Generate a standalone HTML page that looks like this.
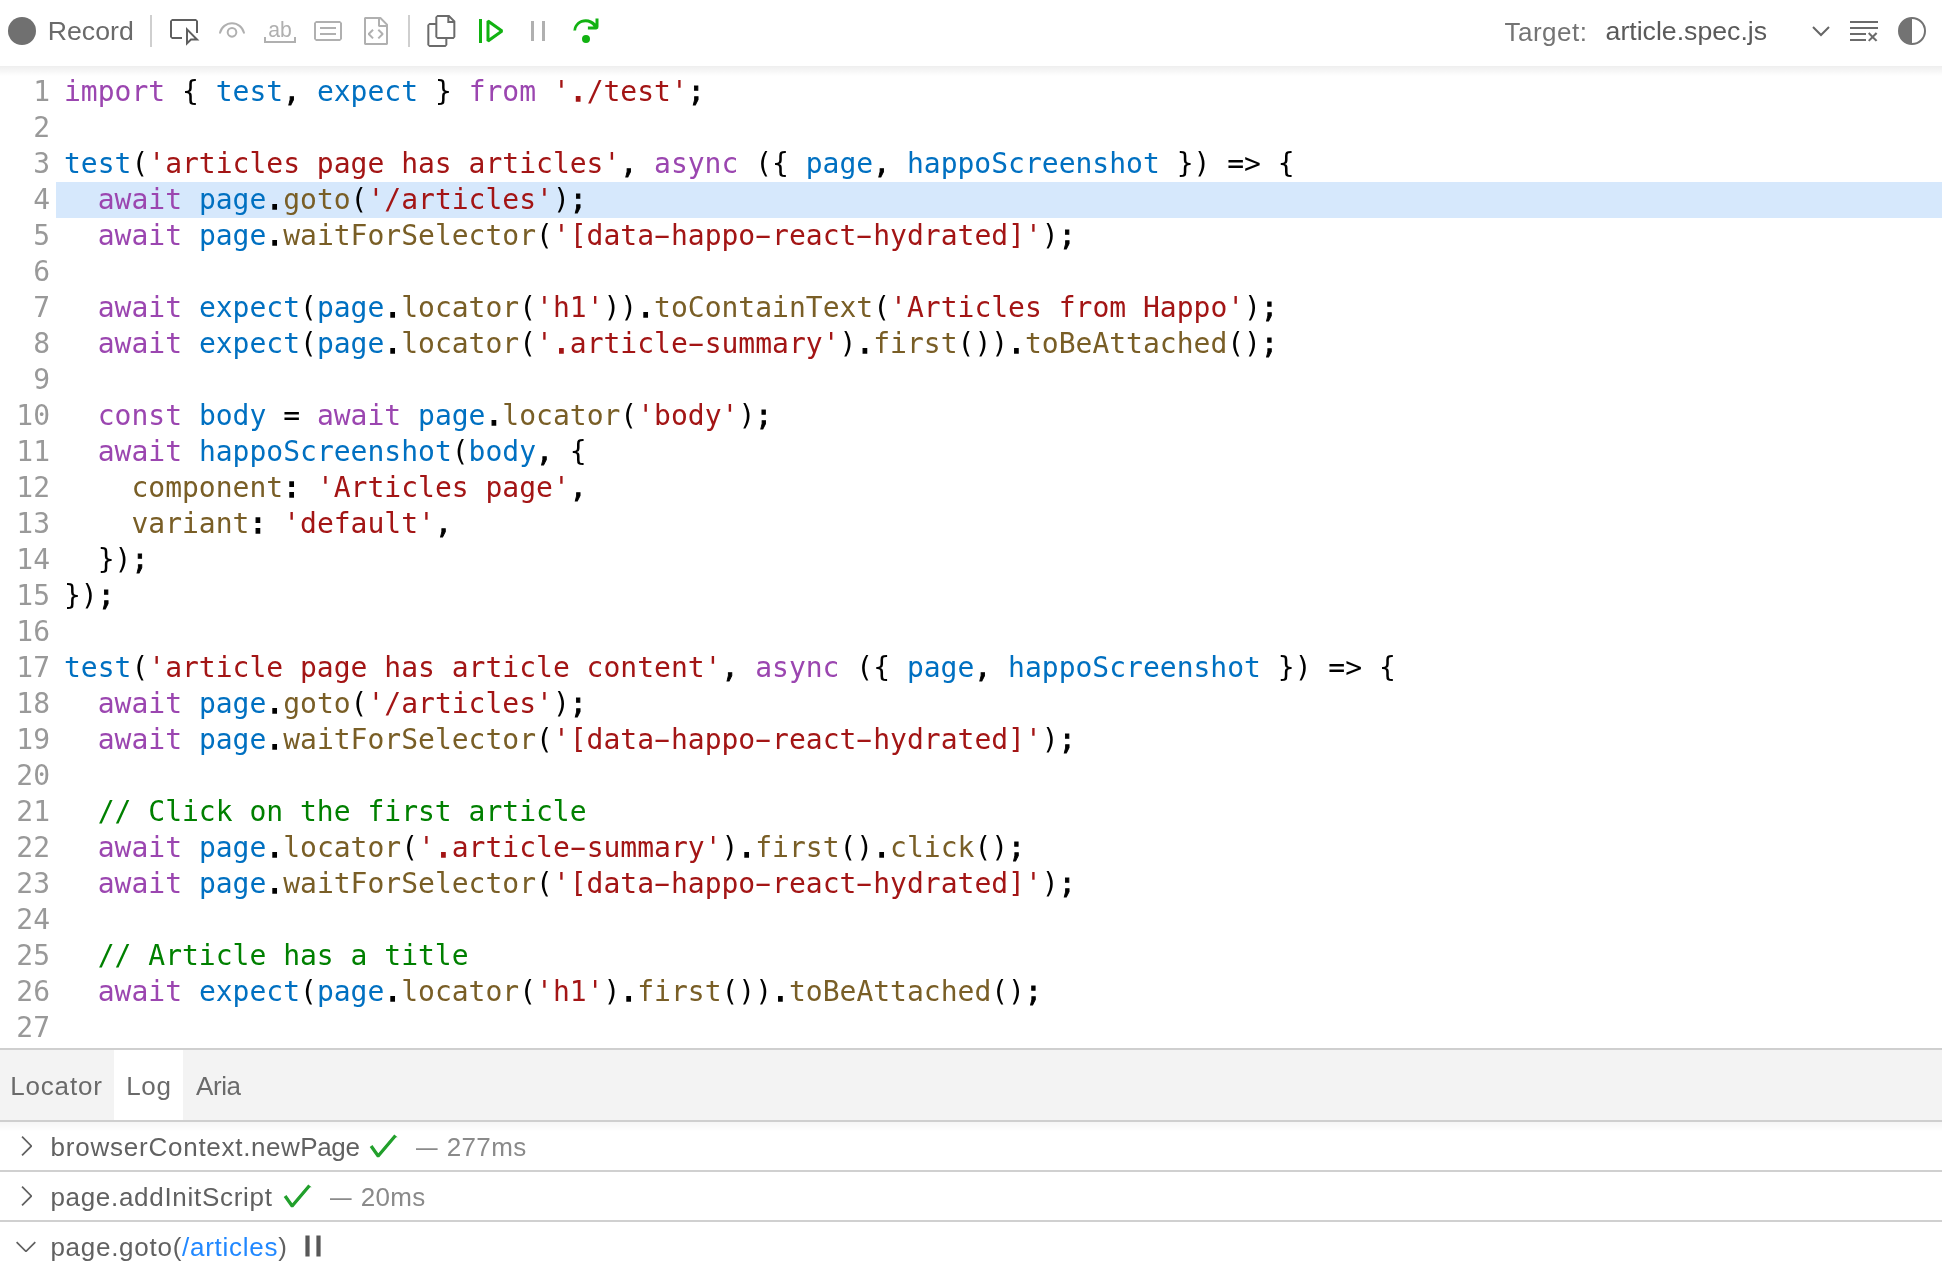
<!DOCTYPE html>
<html lang="en"><head><meta charset="utf-8"><title>Playwright Inspector</title>
<style>
html,body{margin:0;padding:0;background:#fff;}
body{width:1942px;height:1286px;overflow:hidden;position:relative;font-family:"Liberation Sans",Arial,sans-serif;font-size:26px;color:#616161;}
.abs{position:absolute;white-space:nowrap;line-height:1;}
.ic{position:absolute;display:block;}
.shade{position:absolute;left:0;width:1942px;z-index:6;pointer-events:none;}
#toolbar{position:absolute;left:0;top:0;width:1942px;height:66px;background:#fff;z-index:5;}
.sep{position:absolute;top:15px;width:2px;height:32px;background:#cfcfcf;}
#code{position:absolute;left:0;top:66px;width:1942px;height:982px;padding-top:8px;box-sizing:border-box;overflow:hidden;background:#fff;
 font-family:"DejaVu Sans Mono","Liberation Mono",monospace;font-size:28px;line-height:36px;color:#000;}
.ln{position:relative;height:36px;white-space:pre;}
.ln.hl::before{content:"";position:absolute;left:56px;right:0;top:0;bottom:0;background:#d6e8fc;}
.no{position:absolute;left:0;top:0;width:50px;text-align:right;color:#999;}
.tx{position:absolute;left:64px;top:0;}
.h{display:inline-block;transform:scaleX(1.85);transform-origin:53% 50%}
.d{-webkit-text-stroke:1.3px currentColor}.d2{-webkit-text-stroke:0.9px currentColor}
.k{color:#9b46b0}.v{color:#0070c1}.s{color:#a31515}.p{color:#795e26}.c{color:#008000}
#tabs{position:absolute;left:0;top:1048px;width:1942px;height:74px;box-sizing:border-box;border-top:2px solid #cfcfcf;border-bottom:2px solid #cfcfcf;background:#f3f3f3;z-index:4;}
#tabsel{position:absolute;left:114px;top:0;width:69px;height:70px;background:#fff;}
.row{position:absolute;left:0;width:1942px;height:48px;border-bottom:2px solid #d0d0d0;}
.t{color:#8a8a8a;letter-spacing:0.35px}
.dash{display:inline-block;transform:scaleX(0.83);transform-origin:0 50%;margin-right:-3.2px;}
#app{position:absolute;left:0;top:0;width:1942px;height:1286px;will-change:transform;}
</style></head><body><div id="app">
<div id="toolbar">
<svg class="ic" style="left:6px;top:15px" width="32" height="32" viewBox="0 0 16 16" fill="#707070"><circle cx="8" cy="8" r="7"/></svg><span class="abs" id="rec" style="left:47.8px;top:18.2px;font-size:26.67px;color:#6a6a6a">Record</span><div class="sep" style="left:150px"></div><svg class="ic" style="left:168px;top:15px" width="32" height="32" viewBox="0 0 16 16" fill="#5f5f5f"><path fill-rule="evenodd" d="M1 3l1-1h12l1 1v6h-1V3H2v8h5v1H2l-1-1V3zm14.707 9.707L9 6v9.414l2.707-2.707h4zM10 13V8.414l3.293 3.293h-2L10 13z"/></svg><svg class="ic" style="left:216px;top:15px" width="32" height="32" viewBox="0 0 16 16" fill="#b0b0b0"><path d="M8 6.003a2.667 2.667 0 1 1 0 5.334 2.667 2.667 0 0 1 0-5.334zm0 1a1.667 1.667 0 1 0 0 3.334 1.667 1.667 0 0 0 0-3.334zM8 3.667c3.076 0 5.731 2.1 6.467 5.043a.5.5 0 0 1-.97.243A5.668 5.668 0 0 0 8 4.667a5.668 5.668 0 0 0-5.498 4.289.5.5 0 0 1-.97-.243C2.267 5.769 4.923 3.667 8 3.667z"/></svg><svg class="ic" style="left:264px;top:15px" width="32" height="32" viewBox="0 0 16 16" fill="#b0b0b0"><path d="M0 11H1V13H15V11H16V14H0V11Z"/><text x="8" y="11" text-anchor="middle" font-family="Liberation Sans, Arial, sans-serif" font-size="11.3" textLength="11.8" lengthAdjust="spacingAndGlyphs" fill="#b0b0b0">ab</text></svg><svg class="ic" style="left:312px;top:15px" width="32" height="32" viewBox="0 0 16 16" fill="#b0b0b0"><path fill-rule="evenodd" d="M4 6h8v1H4V6zm8 3H4v1h8V9z"/><path fill-rule="evenodd" d="M1 4l1-1h12l1 1v8l-1 1H2l-1-1V4zm1 0v8h12V4H2z"/></svg><svg class="ic" style="left:360px;top:15px" width="32" height="32" viewBox="0 0 16 16" fill="#b0b0b0"><path fill-rule="evenodd" d="M10.57 1.14l3.28 3.3.15.36v9.7l-.5.5h-11l-.5-.5v-13l.5-.5h7.72l.35.14zM10 5h3l-3-3v3zM3 2v12h10V6H9.5L9 5.5V2H3zm2.062 7.533l1.817-1.828L6.17 7 4 9.179v.707l2.171 2.174.707-.707-1.816-1.82zM8.8 7.714l.7-.709 2.189 2.175v.709L9.5 12.062l-.705-.709 1.831-1.82L8.8 7.714z"/></svg><div class="sep" style="left:408px"></div><svg class="ic" style="left:426px;top:15px" width="32" height="32" viewBox="0 0 24 24" fill="#6b6b6b"><path fill-rule="evenodd" d="M17.5 0h-9L7 1.5V6H2.5L1 7.5v15.07L2.5 24h12.07L16 22.57V18h4.7l1.3-1.43V4.5L17.5 0zm0 2.12l2.38 2.38H17.5V2.12zm-3 20.38h-12v-15H7v9.07L8.5 18h6v4.5zm6-6h-12v-15H16V6h4.5v10.5z"/></svg><svg class="ic" style="left:474px;top:15px" width="32" height="32" viewBox="0 0 16 16" fill="#12b212"><path fill-rule="evenodd" d="M2.5 2H4v12H2.5V2zm4.936.39L6.25 3v10l1.186.61 7-5V7.39l-7-5zM12.71 8l-4.96 3.54V4.46L12.71 8z"/></svg><svg class="ic" style="left:522px;top:15px" width="32" height="32" viewBox="0 0 16 16" fill="#b0b0b0"><path d="M4.5 3H6v10H4.5V3zm7 0v10H10V3h1.5z"/></svg><svg class="ic" style="left:570px;top:15px" width="32" height="32" viewBox="0 0 16 16" fill="#12b212"><path fill-rule="evenodd" d="M14.25 5.75v-4h-1.5v2.542c-1.145-1.359-2.911-2.209-4.84-2.209-3.177 0-5.92 2.307-6.16 5.398l-.2.269h1.501l.022-.226c.212-2.195 2.202-3.94 4.656-3.94 1.736 0 3.244.875 4.05 2.166h-2.83v1.5h4.2l.92-.5zM8 14a2 2 0 1 0 0-4 2 2 0 0 0 0 4z"/></svg><span class="abs" id="tgt" style="left:1504.5px;top:19px;font-size:26px;letter-spacing:0.5px;color:#747474">Target:</span><span class="abs" id="sel" style="left:1605.6px;top:18px;font-size:26.67px;color:#5a5a5a">article.spec.js</span><svg class="ic" style="left:1808px;top:20px" width="26" height="22" viewBox="0 0 26 22" fill="none" stroke="#666" stroke-width="2"><path d="M5 7 L13 15 L21 7"/></svg><svg class="ic" style="left:1848px;top:15px" width="32" height="32" viewBox="0 0 16 16" fill="#6b6b6b"><path d="M10 12.6l.7.7 1.6-1.6 1.6 1.6.8-.7L13 11l1.700-1.600-.8-.8-1.6 1.7-1.6-1.7-.7.8 1.6 1.6-1.6 1.600zM1 4h14V3H1v1zm0 3h14V6H1v1zm8 2.500V9H1v1h8v-.5zM9 13v-1H1v1h8z"/></svg><svg class="ic" style="left:1896px;top:15px" width="32" height="32" viewBox="0 0 16 16" fill="#737373"><path fill-rule="evenodd" d="M8 1a7 7 0 1 0 0 14A7 7 0 0 0 8 1zm0 13V2a6 6 0 1 1 0 12z"/></svg></div>
<div class="shade" style="top:66px;height:10px;background:linear-gradient(to bottom,rgba(0,0,0,0.065),rgba(0,0,0,0))"></div>
<div class="shade" style="top:1122px;height:9px;background:linear-gradient(to bottom,rgba(0,0,0,0.04),rgba(0,0,0,0))"></div>
<div id="code">
<div class="ln"><span class="no">1</span><span class="tx"><span class="k">import</span> { <span class="v">test</span><span class="d2">,</span> <span class="v">expect</span> } <span class="k">from</span> <span class="s">'<span class="d">.</span>/test'</span><span class="d2">;</span></span></div>
<div class="ln"><span class="no">2</span><span class="tx"></span></div>
<div class="ln"><span class="no">3</span><span class="tx"><span class="v">test</span>(<span class="s">'articles page has articles'</span><span class="d2">,</span> <span class="k">async</span> ({ <span class="v">page</span><span class="d2">,</span> <span class="v">happoScreenshot</span> }) =&gt; {</span></div>
<div class="ln hl"><span class="no">4</span><span class="tx">  <span class="k">await</span> <span class="v">page</span><span class="d">.</span><span class="p">goto</span>(<span class="s">'/articles'</span>)<span class="d2">;</span></span></div>
<div class="ln"><span class="no">5</span><span class="tx">  <span class="k">await</span> <span class="v">page</span><span class="d">.</span><span class="p">waitForSelector</span>(<span class="s">'[data<span class="h">-</span>happo<span class="h">-</span>react<span class="h">-</span>hydrated]'</span>)<span class="d2">;</span></span></div>
<div class="ln"><span class="no">6</span><span class="tx"></span></div>
<div class="ln"><span class="no">7</span><span class="tx">  <span class="k">await</span> <span class="v">expect</span>(<span class="v">page</span><span class="d">.</span><span class="p">locator</span>(<span class="s">'h1'</span>))<span class="d">.</span><span class="p">toContainText</span>(<span class="s">'Articles from Happo'</span>)<span class="d2">;</span></span></div>
<div class="ln"><span class="no">8</span><span class="tx">  <span class="k">await</span> <span class="v">expect</span>(<span class="v">page</span><span class="d">.</span><span class="p">locator</span>(<span class="s">'<span class="d">.</span>article<span class="h">-</span>summary'</span>)<span class="d">.</span><span class="p">first</span>())<span class="d">.</span><span class="p">toBeAttached</span>()<span class="d2">;</span></span></div>
<div class="ln"><span class="no">9</span><span class="tx"></span></div>
<div class="ln"><span class="no">10</span><span class="tx">  <span class="k">const</span> <span class="v">body</span> = <span class="k">await</span> <span class="v">page</span><span class="d">.</span><span class="p">locator</span>(<span class="s">'body'</span>)<span class="d2">;</span></span></div>
<div class="ln"><span class="no">11</span><span class="tx">  <span class="k">await</span> <span class="v">happoScreenshot</span>(<span class="v">body</span><span class="d2">,</span> {</span></div>
<div class="ln"><span class="no">12</span><span class="tx">    <span class="p">component</span><span class="d">:</span> <span class="s">'Articles page'</span><span class="d2">,</span></span></div>
<div class="ln"><span class="no">13</span><span class="tx">    <span class="p">variant</span><span class="d">:</span> <span class="s">'default'</span><span class="d2">,</span></span></div>
<div class="ln"><span class="no">14</span><span class="tx">  })<span class="d2">;</span></span></div>
<div class="ln"><span class="no">15</span><span class="tx">})<span class="d2">;</span></span></div>
<div class="ln"><span class="no">16</span><span class="tx"></span></div>
<div class="ln"><span class="no">17</span><span class="tx"><span class="v">test</span>(<span class="s">'article page has article content'</span><span class="d2">,</span> <span class="k">async</span> ({ <span class="v">page</span><span class="d2">,</span> <span class="v">happoScreenshot</span> }) =&gt; {</span></div>
<div class="ln"><span class="no">18</span><span class="tx">  <span class="k">await</span> <span class="v">page</span><span class="d">.</span><span class="p">goto</span>(<span class="s">'/articles'</span>)<span class="d2">;</span></span></div>
<div class="ln"><span class="no">19</span><span class="tx">  <span class="k">await</span> <span class="v">page</span><span class="d">.</span><span class="p">waitForSelector</span>(<span class="s">'[data<span class="h">-</span>happo<span class="h">-</span>react<span class="h">-</span>hydrated]'</span>)<span class="d2">;</span></span></div>
<div class="ln"><span class="no">20</span><span class="tx"></span></div>
<div class="ln"><span class="no">21</span><span class="tx">  <span class="c">// Click on the first article</span></span></div>
<div class="ln"><span class="no">22</span><span class="tx">  <span class="k">await</span> <span class="v">page</span><span class="d">.</span><span class="p">locator</span>(<span class="s">'<span class="d">.</span>article<span class="h">-</span>summary'</span>)<span class="d">.</span><span class="p">first</span>()<span class="d">.</span><span class="p">click</span>()<span class="d2">;</span></span></div>
<div class="ln"><span class="no">23</span><span class="tx">  <span class="k">await</span> <span class="v">page</span><span class="d">.</span><span class="p">waitForSelector</span>(<span class="s">'[data<span class="h">-</span>happo<span class="h">-</span>react<span class="h">-</span>hydrated]'</span>)<span class="d2">;</span></span></div>
<div class="ln"><span class="no">24</span><span class="tx"></span></div>
<div class="ln"><span class="no">25</span><span class="tx">  <span class="c">// Article has a title</span></span></div>
<div class="ln"><span class="no">26</span><span class="tx">  <span class="k">await</span> <span class="v">expect</span>(<span class="v">page</span><span class="d">.</span><span class="p">locator</span>(<span class="s">'h1'</span>)<span class="d">.</span><span class="p">first</span>())<span class="d">.</span><span class="p">toBeAttached</span>()<span class="d2">;</span></span></div>
<div class="ln"><span class="no">27</span><span class="tx"></span></div>
</div>
<div id="tabs"><div id="tabsel"></div><span class="abs" id="t1" style="left:10.3px;top:23px;letter-spacing:0.8px;color:#6a6a6a">Locator</span><span class="abs" id="t2" style="left:126.3px;top:23px;letter-spacing:0.6px;color:#6a6a6a">Log</span><span class="abs" id="t3" style="left:196px;top:23px;letter-spacing:-0.4px;color:#6a6a6a">Aria</span></div>
<div class="row" style="top:1122px"><svg class="ic" style="left:10px;top:8px" width="32" height="32" viewBox="0 0 16 16" fill="#616161"><path fill-rule="evenodd" d="M10.072 8.024L5.715 3.667l.618-.62L11 7.716v.618L6.333 13l-.618-.619 4.357-4.357z"/></svg><span class="abs" id="r1" style="left:50.4px;top:12px;letter-spacing:0.52px"><span style="letter-spacing:0.81px">browser</span><span style="letter-spacing:0.72px">Context</span>.new<span style="letter-spacing:-0.35px">Page</span></span><svg class="ic" style="left:367.4px;top:8px" width="32" height="32" viewBox="0 0 16 16" fill="#22a02c"><path fill-rule="evenodd" d="M14.431 3.323l-8.47 10-.79-.036-3.35-4.77.818-.574 2.978 4.24 8.051-9.506.764.646z"/><path fill="none" stroke="#22a02c" stroke-width="0.65" stroke-linejoin="miter" fill-rule="evenodd" d="M14.431 3.323l-8.47 10-.79-.036-3.35-4.77.818-.574 2.978 4.24 8.051-9.506.764.646z"/></svg><span class="abs t" id="r1t" style="left:416px;top:12px"><span class="dash">—</span> 277ms</span></div>
<div class="row" style="top:1172px"><svg class="ic" style="left:10px;top:8px" width="32" height="32" viewBox="0 0 16 16" fill="#616161"><path fill-rule="evenodd" d="M10.072 8.024L5.715 3.667l.618-.62L11 7.716v.618L6.333 13l-.618-.619 4.357-4.357z"/></svg><span class="abs" id="r2" style="left:50.4px;top:12px;letter-spacing:0.70px">page.addInitScript</span><svg class="ic" style="left:281.4px;top:8px" width="32" height="32" viewBox="0 0 16 16" fill="#22a02c"><path fill-rule="evenodd" d="M14.431 3.323l-8.47 10-.79-.036-3.35-4.77.818-.574 2.978 4.24 8.051-9.506.764.646z"/><path fill="none" stroke="#22a02c" stroke-width="0.65" stroke-linejoin="miter" fill-rule="evenodd" d="M14.431 3.323l-8.47 10-.79-.036-3.35-4.77.818-.574 2.978 4.24 8.051-9.506.764.646z"/></svg><span class="abs t" id="r2t" style="left:330px;top:12px"><span class="dash">—</span> 20ms</span></div>
<div class="row" style="top:1222px;border-bottom:none;height:64px"><svg class="ic" style="left:10px;top:8px" width="32" height="32" viewBox="0 0 16 16" fill="#616161"><path fill-rule="evenodd" d="M7.976 10.072l4.357-4.357.62.618L8.284 11h-.618L3 6.333l.619-.618 4.357 4.357z"/></svg><span class="abs" id="r3" style="left:50.4px;top:12px;letter-spacing:0.73px">page.goto(<span style="color:#2188ff">/articles</span>)</span><svg class="ic" style="left:297px;top:8px" width="32" height="32" viewBox="0 0 16 16" fill="#585858"><path d="M4.5 3H6v10H4.5V3zm7 0v10H10V3h1.5z"/><path d="M4.5 3H6v10H4.5V3zm7 0v10H10V3h1.5z" fill="none" stroke="#585858" stroke-width="0.6"/></svg></div>
</div></body></html>
